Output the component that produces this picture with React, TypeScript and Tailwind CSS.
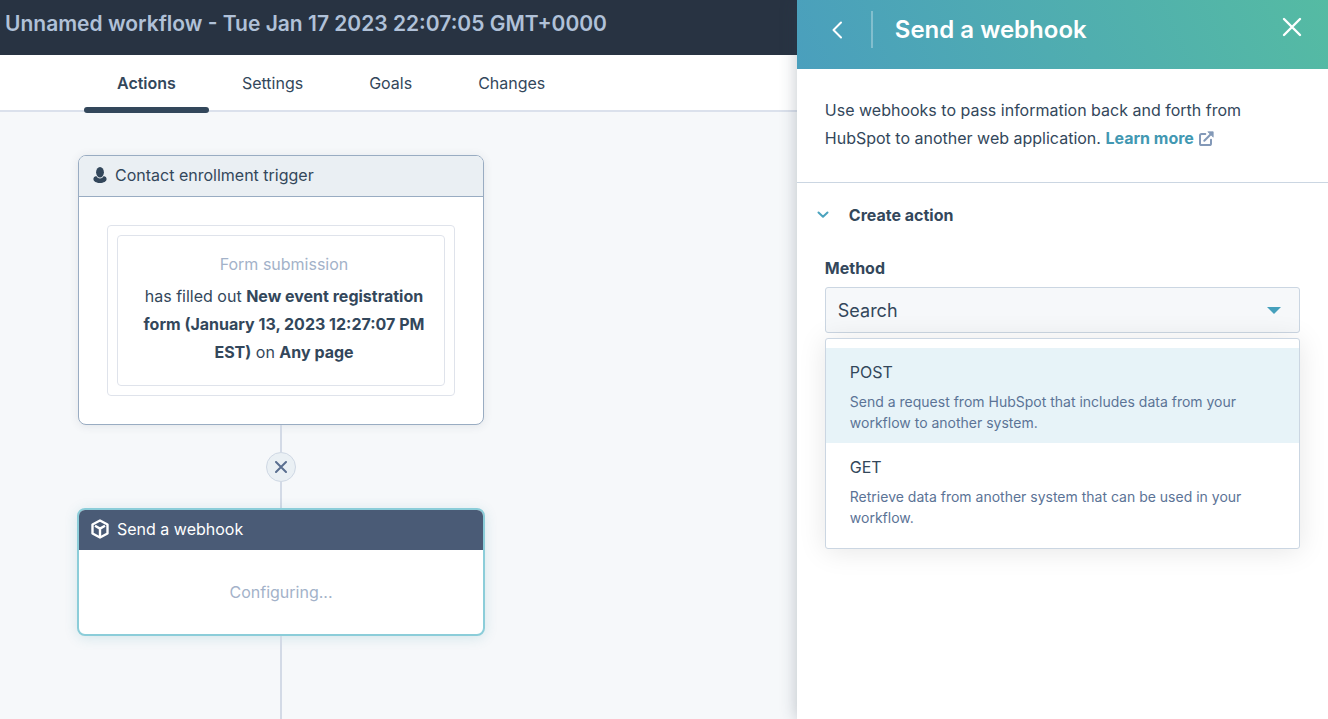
import React, { useState } from 'react';

const tabs = ['Actions', 'Settings', 'Goals', 'Changes'];

const methods = [
  {
    name: 'POST',
    description: 'Send a request from HubSpot that includes data from your workflow to another system.',
  },
  {
    name: 'GET',
    description: 'Retrieve data from another system that can be used in your workflow.',
  },
];

const ContactIcon: React.FC = () => (
  <svg width="14" height="16" viewBox="0 0 14 16" fill="#33475b" aria-hidden="true">
    <ellipse cx="7" cy="5.2" rx="3.9" ry="5.2" />
    <path d="M3.300 9C1.500 9.400.4 10.500.4 12c0 2.400 3 4 6.600 4s6.600-1.600 6.600-4c0-1.500-1.100-2.600-2.900-3-.7 1.500-2 2.500-3.700 2.500S4 10.500 3.300 9z" />
  </svg>
);

const CubeIcon: React.FC = () => (
  <svg
    width="18"
    height="20"
    viewBox="0 0 18 20"
    fill="none"
    stroke="#ffffff"
    strokeWidth="2.4"
    strokeLinejoin="round"
    aria-hidden="true"
  >
    <path d="M9 1.500 16.500 5.500v9L9 18.500 1.500 14.500v-9z" />
    <path d="M4 6.800 9 9.600l5-2.800M9 9.600v8.400" />
  </svg>
);

const ExternalIcon: React.FC = () => (
  <svg
    width="15"
    height="15"
    viewBox="0 0 15 15"
    fill="none"
    stroke="#8399b8"
    strokeWidth="2"
    strokeLinecap="round"
    strokeLinejoin="round"
    className="ml-[5px] inline-block align-[-2px]"
    aria-hidden="true"
  >
    <path d="M6.300 3H2.600C1.700 3 1 3.700 1 4.600v7.800c0 .9.7 1.600 1.600 1.600h7.800c.9 0 1.600-.7 1.600-1.600V8.700" />
    <path d="M5.300 9.700 12.500 2.500" />
    <path d="M9.200.8h5v5z" fill="#8399b8" strokeWidth="0.800" />
  </svg>
);

const Workflow: React.FC = () => (
  <main className="flex flex-1 flex-col bg-[#f6f8fa] pl-[77px] pt-[43px]">
    <div className="flex w-[408px] flex-1 flex-col items-center">
      <section className="w-[406px] overflow-hidden rounded-lg border border-[#99acc2] bg-white shadow-[0_1px_10px_rgba(45,62,80,0.1)]">
        <h2 className="flex items-center gap-2 border-b border-[#99acc2] bg-[#eaeff3] px-[14px] pt-[5px] pb-[7px] leading-7">
          <ContactIcon />
          Contact enrollment trigger
        </h2>
        <div className="p-7">
          <div className="rounded-sm border border-[#dfe3eb] p-[9px]">
            <div className="rounded-sm border border-[#dfe3eb] pt-[14px] pr-3 pb-[19px] pl-[18px] text-center leading-7">
              <p className="mb-1 text-[#a3b2c9]">Form submission</p>
              <p>
                has filled out{' '}
                <b className="font-bold">New event registration form (January 13, 2023 12:27:07 PM EST)</b> on{' '}
                <b className="font-bold">Any page</b>
              </p>
            </div>
          </div>
        </div>
      </section>

      <div className="h-[27px] w-[2px] bg-[#d3dae6]" />
      <button
        type="button"
        aria-label="Remove"
        className="flex size-[30px] items-center justify-center rounded-full border border-[#cfd8e4] bg-[#eaf0f4]"
      >
        <svg width="12" height="12" viewBox="0 0 12 12" stroke="#5a6f90" strokeWidth="2" strokeLinecap="round">
          <path d="M1 1l10 10M11 1 1 11" />
        </svg>
      </button>
      <div className="h-[26px] w-[2px] bg-[#d3dae6]" />

      <section className="w-full overflow-hidden rounded-lg border-2 border-[#8bcdd9] bg-white shadow-[0_2px_14px_rgba(0,120,140,0.14)]">
        <h2 className="flex items-center gap-2 bg-[#4a5b76] px-3 pt-[5px] pb-[7px] leading-7 text-white">
          <CubeIcon />
          Send a webhook
        </h2>
        <p className="py-7 text-center leading-7 text-[#a3b2c9]">Configuring...</p>
      </section>
      <div className="w-[2px] flex-1 bg-[#d3dae6]" />
    </div>
  </main>
);

const WebhookPanel: React.FC = () => {
  const [method, setMethod] = useState('Search');

  return (
    <aside className="relative w-2/5 bg-white shadow-[0_0_16px_rgba(45,62,80,0.3)]">
      <header className="flex justify-between bg-linear-[66deg] from-[#4a9fbd] to-[#55bba3] pt-[11px] pr-[26px] pb-[21px] pl-[34px] text-white">
        <div className="flex items-center">
          <button type="button" aria-label="Back" className="flex w-10 items-center">
            <svg width="12" height="18" viewBox="0 0 12 18" fill="none" stroke="currentColor" strokeWidth="2" strokeLinecap="round" strokeLinejoin="round">
              <path d="M10 1.500 2.500 9l7.500 7.500" />
            </svg>
          </button>
          <div className="h-[37px] w-[2px] bg-white/30" />
          <h1 className="ml-[22px] text-2xl font-semibold leading-7">Send a webhook</h1>
        </div>
        <button type="button" aria-label="Close" className="mt-[6px] size-5">
          <svg width="20" height="20" viewBox="0 0 20 20" fill="none" stroke="currentColor" strokeWidth="2.400" strokeLinecap="round">
            <path d="M2 2l16 16M18 2 2 18" />
          </svg>
        </button>
      </header>

      <p className="border-b border-[#cbd6e2] px-7 pt-[27px] pb-[30px] leading-7">
        Use webhooks to pass information back and forth from HubSpot to another web application.{' '}
        <a href="#" className="whitespace-nowrap font-bold text-[#4298b2]">
          Learn more
          <ExternalIcon />
        </a>
      </p>

      <button type="button" aria-expanded="true" className="mt-[18px] flex items-center gap-5 pl-5 font-bold leading-7">
        <svg width="12" height="8" viewBox="0 0 12 8" fill="none" stroke="#4ba3be" strokeWidth="2" strokeLinecap="round" strokeLinejoin="round">
          <path d="M1.500 1.500 6 5.800l4.500-4.300" />
        </svg>
        Create action
      </button>

      <div className="px-7 pt-[25px]">
        <label htmlFor="method" className="block pb-[5px] font-bold leading-7">
          Method
        </label>
        <div className="relative">
          <select
            id="method"
            value={method}
            onChange={(e) => setMethod(e.target.value)}
            className="block h-[46px] w-full appearance-none rounded-[3px] border border-[#cbd6e2] bg-[#f6f8fa] px-3 pt-[2px] text-lg"
          >
            <option>Search</option>
            {methods.map((item) => (
              <option key={item.name}>{item.name}</option>
            ))}
          </select>
          <svg width="14" height="7" viewBox="0 0 14 7" className="pointer-events-none absolute top-5 right-[19px]" fill="#45a0bc" aria-hidden="true">
            <path d="M0 0h14L7 7z" />
          </svg>

          <ul
            role="listbox"
            aria-label="Method"
            className="absolute top-full right-0 left-0 mt-[5px] rounded-[3px] border border-[#cbd6e2] bg-white pt-[9px] pb-[10px] shadow-[0_2px_28px_rgba(0,0,0,0.1)]"
          >
            {methods.map((item, index) => (
              <li
                key={item.name}
                role="option"
                aria-selected={method === item.name}
                onClick={() => setMethod(item.name)}
                className={`cursor-pointer py-[10px] pr-10 pl-6 hover:bg-[#e7f3f8] ${index === 0 ? 'bg-[#e7f3f8]' : ''}`}
              >
                <div className="mb-[5px] leading-7">{item.name}</div>
                <div className="text-sm leading-[21px] text-[#5b7396]">{item.description}</div>
              </li>
            ))}
          </ul>
        </div>
      </div>
    </aside>
  );
};

const App: React.FC = () => {
  const [activeTab, setActiveTab] = useState('Actions');

  return (
    <div className="flex min-h-screen overflow-hidden font-['Inter',sans-serif] text-base text-[#33475b]">
      <div className="flex min-w-0 flex-1 flex-col">
        <header className="bg-[#283342] pt-[10px] pb-[17px] pl-[5px]">
          <h1 className="truncate text-[21px] font-semibold leading-7 text-[#b0c1d8]">
            Unnamed workflow - Tue Jan 17 2023 22:07:05 GMT+0000
          </h1>
        </header>
        <nav className="flex border-b-2 border-[#dbe1ec] bg-white pl-[84px]">
          {tabs.map((tab) => (
            <button
              key={tab}
              type="button"
              onClick={() => setActiveTab(tab)}
              className={`relative px-[33px] pt-[14px] pb-[13px] leading-7 ${activeTab === tab ? 'font-semibold' : ''}`}
            >
              {tab}
              {activeTab === tab && <span className="absolute right-0 -bottom-[3px] left-0 h-[6px] rounded-[3px] bg-[#33475b]" />}
            </button>
          ))}
        </nav>
        <Workflow />
      </div>
      <WebhookPanel />
    </div>
  );
};

export default App;
